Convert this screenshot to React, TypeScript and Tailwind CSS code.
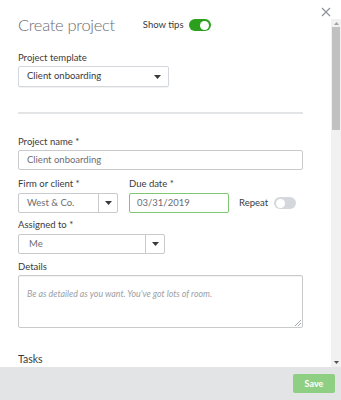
import React from 'react';

const Caret = () => (
  <svg width="7" height="4" viewBox="0 0 7 4" className="shrink-0">
    <path d="M0 0h7L3.5 4z" fill="#393a3d" />
  </svg>
);

const Label = ({ children, className = '' }: { children: React.ReactNode; className?: string }) => (
  <div className={`text-[9.5px] leading-[14px] text-[#393a3d] ${className}`}>{children}</div>
);

const Toggle = ({ on }: { on: boolean }) => (
  <div
    className={`w-[22px] h-[12px] rounded-full p-[1.5px] flex ${on ? 'bg-[#2ca01c] justify-end' : 'bg-[#d4d7dc] justify-start'}`}
  >
    <div className="w-[9px] h-[9px] rounded-full bg-white" />
  </div>
);

const Scrollbar = () => (
  <div className="w-[10px] mt-[19px] bg-[#f1f1f1] flex flex-col items-center">
    <div className="h-[8px] flex items-center justify-center">
      <svg width="5" height="3" viewBox="0 0 5 3">
        <path d="M0 3h5L2.5 0z" fill="#a3a3a3" />
      </svg>
    </div>
    <div className="w-[8px] h-[103px] bg-[#c1c1c1]" />
    <div className="flex-1" />
    <div className="h-[10px] flex items-center justify-center">
      <svg width="5" height="3" viewBox="0 0 5 3">
        <path d="M0 0h5L2.5 3z" fill="#505050" />
      </svg>
    </div>
  </div>
);

export default function App() {
  return (
    <div
      className="relative w-[341px] h-[400px] bg-white flex flex-col overflow-hidden"
      style={{ fontFamily: 'Lato, "Open Sans", sans-serif' }}
    >
      <div className="flex flex-1 min-h-0">
        <div className="flex-1 overflow-hidden pl-[18px] pr-[28px]">
          {/* header */}
          <div className="flex items-center h-[24px] mt-[13px]">
            <span className="text-[16.5px] font-light text-[#6b6c72] tracking-[-0.3px]">Create project</span>
            <span className="ml-[28px] text-[9.5px] text-[#393a3d]">Show tips</span>
            <div className="ml-[5px]">
              <Toggle on />
            </div>
          </div>

          <Label className="mt-[14px]">Project template</Label>
          <div className="mt-[1px] w-[151px] h-[21px] border border-[#d4d7dc] rounded-[2px] shadow-[0_1px_1px_rgba(0,0,0,0.06)] flex items-center justify-between pl-[8px] pr-[7px]">
            <span className="text-[9.5px] text-[#393a3d]">Client onboarding</span>
            <Caret />
          </div>

          <div className="mt-[25px] h-[2px] bg-[#e3e4e6]" />

          <Label className="mt-[21px]">Project name *</Label>
          <div className="mt-[1px] h-[20px] border border-[#c9cacc] rounded-[2px] flex items-center pl-[8px]">
            <span className="text-[9.5px] text-[#6b6c72]">Client onboarding</span>
          </div>

          <div className="flex mt-[7px]">
            <div className="w-[100px]">
              <Label>Firm or client *</Label>
              <div className="mt-[2px] h-[20px] border border-[#c9cacc] rounded-[2px] flex">
                <div className="flex-1 flex items-center pl-[8px] text-[9.5px] text-[#6b6c72]">West &amp; Co.</div>
                <div className="w-[19px] border-l border-[#c9cacc] flex items-center justify-center">
                  <Caret />
                </div>
              </div>
            </div>
            <div className="ml-[11px] w-[100px]">
              <Label>Due date *</Label>
              <div className="mt-[2px] h-[20px] border border-[#7ec872] rounded-[2px] flex items-center pl-[7px]">
                <span className="text-[9.5px] text-[#6b6c72]">03/31/2019</span>
              </div>
            </div>
            <div className="ml-[10px] mt-[16px] h-[20px] flex items-center">
              <span className="text-[9.5px] text-[#393a3d]">Repeat</span>
              <div className="ml-[6px]">
                <Toggle on={false} />
              </div>
            </div>
          </div>

          <Label className="mt-[5px]">Assigned to *</Label>
          <div className="mt-[2px] w-[147px] h-[20px] border border-[#c9cacc] rounded-[2px] flex">
            <div className="flex-1 flex items-center pl-[10px] text-[9.5px] text-[#6b6c72]">Me</div>
            <div className="w-[19px] border-l border-[#c9cacc] flex items-center justify-center">
              <Caret />
            </div>
          </div>

          <Label className="mt-[6px]">Details</Label>
          <div className="relative mt-[1px] h-[53px] border border-[#c9cacc] rounded-[2px] pl-[8px] pt-[3px] shadow-[inset_0_1px_1px_rgba(0,0,0,0.05)]">
            <span className="text-[8.8px] italic text-[#9ca0a6]">
              Be as detailed as you want. You&apos;ve got lots of room.
            </span>
            <svg width="6" height="6" viewBox="0 0 6 6" className="absolute right-[1px] bottom-[1px]">
              <path d="M6 0L0 6M6 3L3 6" stroke="#8d9096" strokeWidth="0.8" />
            </svg>
          </div>

          <div className="mt-[25px] text-[10.5px] leading-[12px] text-[#393a3d]">Tasks</div>
          <div className="text-[9px] leading-[11px] text-[#6b6c72] whitespace-nowrap">
            Save yourself some time. Tasks can help you break it down.
          </div>
        </div>
        <Scrollbar />
      </div>

      <div className="h-[33px] shrink-0 bg-[#e3e4e6] flex justify-end items-start pt-[7px] pr-[6px]">
        <button className="w-[42px] h-[19px] rounded-[2px] bg-[#8fcf84] text-white text-[9px] font-bold">
          Save
        </button>
      </div>

      <button className="absolute right-[10px] top-[7px] text-[#8d9096]">
        <svg width="10" height="10" viewBox="0 0 10 10">
          <path d="M1 1l8 8M9 1L1 9" stroke="#8d9096" strokeWidth="1.1" />
        </svg>
      </button>
    </div>
  );
}
